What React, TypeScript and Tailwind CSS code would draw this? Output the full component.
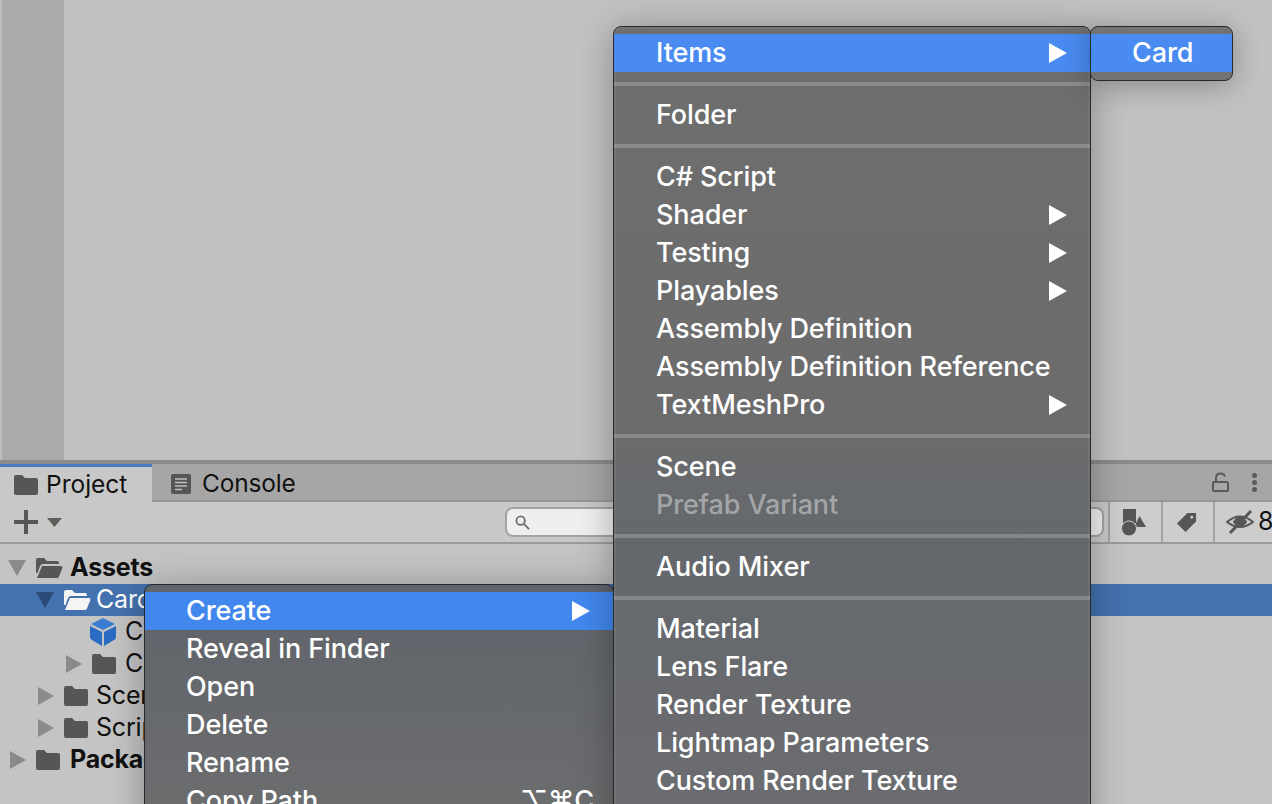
import React from "react";

type Row = { label?: string; arrow?: boolean; active?: boolean; dim?: boolean; shortcut?: string; sep?: boolean };

const MAIN_MENU: Row[] = [
  { label: "Items", arrow: true, active: true },
  { sep: true },
  { label: "Folder" },
  { sep: true },
  { label: "C# Script" },
  { label: "Shader", arrow: true },
  { label: "Testing", arrow: true },
  { label: "Playables", arrow: true },
  { label: "Assembly Definition" },
  { label: "Assembly Definition Reference" },
  { label: "TextMeshPro", arrow: true },
  { sep: true },
  { label: "Scene" },
  { label: "Prefab Variant", dim: true },
  { sep: true },
  { label: "Audio Mixer" },
  { sep: true },
  { label: "Material" },
  { label: "Lens Flare" },
  { label: "Render Texture" },
  { label: "Lightmap Parameters" },
  { label: "Custom Render Texture" },
];

const CONTEXT_MENU: Row[] = [
  { label: "Create", arrow: true, active: true },
  { label: "Reveal in Finder" },
  { label: "Open" },
  { label: "Delete" },
  { label: "Rename" },
  { label: "Copy Path", shortcut: "⌥⌘C" },
];

function Triangle({ dir, color, className }: { dir: "right" | "down"; color: string; className: string }) {
  return (
    <svg viewBox="0 0 18 18" preserveAspectRatio="none" className={className} fill={color}>
      {dir === "right" ? <path d="M0 0 L18 9 L0 18 Z" /> : <path d="M0 0 L18 0 L9 18 Z" />}
    </svg>
  );
}

function Folder({ className, color = "#565656" }: { className: string; color?: string }) {
  return (
    <svg viewBox="0 0 24 20" className={className} fill={color}>
      <path d="M0 2 Q0 0 2 0 H8 L11 3 H22 Q24 3 24 5 V18 Q24 20 22 20 H2 Q0 20 0 18 Z" />
    </svg>
  );
}

function OpenFolder({ className, color = "#565656" }: { className: string; color?: string }) {
  return (
    <svg viewBox="0 0 27 20" className={className} fill={color}>
      <path d="M0 2 Q0 0 2 0 H8 L11 3 H21 Q23 3 23 5 V6 H7 Q5 6 4 8 L1.5 15 H0 Z" />
      <path d="M6 8 H25 Q27 8 26.4 10 L23 18.5 Q22.4 20 21 20 H1 Z" />
    </svg>
  );
}

function Cube() {
  return (
    <svg viewBox="0 0 26 28" className="w-[26px] h-[28px]">
      <path d="M13 0 L25 6 L13 12 L1 6 Z" fill="#3b7dd0" />
      <path d="M0 8 L12 14 V28 L2 22 Q0 21 0 19 Z" fill="#2a6cc4" />
      <path d="M26 8 L14 14 V28 L24 22 Q26 21 26 19 Z" fill="#2a6cc4" />
    </svg>
  );
}

function MenuRow({
  row,
  left = "pl-[42px]",
  activeBg = "bg-[#4a8bf2]",
}: {
  row: Row;
  left?: string;
  activeBg?: string;
}) {
  if (row.sep) {
    return (
      <div className="py-[10px]">
        <div className="h-1 bg-white/20" />
      </div>
    );
  }
  return (
    <div
      className={`h-[38px] flex items-center justify-between ${left} pr-[23px] text-[27px] font-medium tracking-[-0.1px] leading-none ${
        row.active ? activeBg : ""
      } ${row.dim ? "text-[#a3a5a8]" : "text-white"}`}
    >
      <span className="whitespace-nowrap -mt-[2px]">{row.label}</span>
      {row.arrow && <Triangle dir="right" color="#ffffff" className="w-[18px] h-5" />}
      {row.shortcut && <span className="-mr-1 whitespace-nowrap -mt-[2px]">{row.shortcut}</span>}
    </div>
  );
}

function TreeRow({
  pad,
  selected,
  bold,
  children,
  label,
}: {
  pad: number;
  selected?: boolean;
  bold?: boolean;
  children: React.ReactNode;
  label: string;
}) {
  return (
    <div
      className={`h-8 flex items-center text-[25px] tracking-[-0.2px] ${selected ? "bg-[#4472ae] text-white" : "text-[#111]"} ${
        bold ? "font-bold" : ""
      }`}
      style={{ paddingLeft: pad }}
    >
      {children}
      <span className="whitespace-nowrap">{label}</span>
    </div>
  );
}

export default function App() {
  return (
    <div className="relative w-[1272px] h-[804px] overflow-hidden bg-[#c2c2c2] [font-family:Inter,sans-serif]">
      <div className="flex flex-col h-full">
        {/* scene area */}
        <div className="h-[460px] flex shrink-0">
          <div className="w-16 bg-[#aaaaaa] border-l-2 border-[#bdbdbd]" />
        </div>
        <div className="h-1 bg-[#8b8b8b] shrink-0" />

        {/* tabs */}
        <div className="h-[38px] shrink-0 flex items-stretch bg-[#a6a6a6] border-b-2 border-[#979797]">
          <div className="w-[152px] -mb-[2px] bg-[#c8c8c8] border-t-[3px] border-[#4d7bc0] flex items-center pl-[14px] text-[24.5px] text-[#111]">
            <Folder className="w-6 h-5 mr-2" />
            Project
          </div>
          <div className="flex items-center pl-[19px] pt-[3px] text-[24.5px] tracking-[-0.2px] text-[#111]">
            <svg viewBox="0 0 20 20" className="w-5 h-5 mr-[11px]">
              <rect width="20" height="20" rx="2" fill="#565656" />
              <path d="M4 5 H16 M4 8.5 H16 M4 12 H16 M4 15.5 H11" stroke="#c0c0c0" strokeWidth="1.4" />
            </svg>
            Console
          </div>
          <div className="ml-auto flex items-center gap-[22px] pr-[15px]">
            <svg viewBox="0 0 18 20" className="w-[18px] h-5" fill="none" stroke="#5a5a5a" strokeWidth="2">
              <rect x="1" y="10" width="15" height="9" rx="1" />
              <path d="M4 10 V6 Q4 1.5 8.5 1.5 Q12 1.5 13 4.5" />
            </svg>
            <div className="flex flex-col gap-[2px]">
              <div className="w-[5px] h-[5px] rounded-full bg-[#5a5a5a]" />
              <div className="w-[5px] h-[5px] rounded-full bg-[#5a5a5a]" />
              <div className="w-[5px] h-[5px] rounded-full bg-[#5a5a5a]" />
            </div>
          </div>
        </div>

        {/* toolbar */}
        <div className="h-[42px] shrink-0 flex items-center bg-[#c8c8c8] border-b-2 border-[#9b9b9b]">
          <svg viewBox="0 0 24 24" className="w-6 h-6 ml-[14px]" fill="#565656">
            <path d="M10 0 H14 V10 H24 V14 H14 V24 H10 V14 H0 V10 H10 Z" />
          </svg>
          <Triangle dir="down" color="#5f5f5a" className="w-[15px] h-[9px] ml-[9px]" />
          <div className="ml-[443px] w-[599px] h-[30px] rounded-lg bg-[#efefef] border-2 border-[#a3a3a3] flex items-center pl-2">
            <svg viewBox="0 0 16 16" className="w-[15px] h-[15px]" fill="none" stroke="#6e6e6e" strokeWidth="2">
              <circle cx="6" cy="6" r="4.5" />
              <path d="M9.5 9.5 L15 15" />
            </svg>
          </div>
          <div className="ml-[4px] h-full w-[53px] border-l-2 border-[#a3a3a3] bg-[#cdcdcd] flex items-center justify-center">
            <svg viewBox="0 0 25 27" className="w-[25px] h-[27px] -ml-1" fill="#565656">
              <rect x="2" y="0" width="13" height="14" />
              <path d="M18.5 7 L25 18 H13 Z" />
              <circle cx="8" cy="19.5" r="7.5" stroke="#cdcdcd" strokeWidth="1" />
            </svg>
          </div>
          <div className="h-full w-[52px] border-l-2 border-[#a3a3a3] bg-[#cdcdcd] flex items-center justify-center">
            <svg viewBox="0 0 22 22" className="w-[21px] h-[21px] -ml-1" fill="#565656">
              <path d="M12 1 H21 V10 L10 21 L1 12 Z M16.5 4 A1.5 1.5 0 1 0 16.5 7 A1.5 1.5 0 1 0 16.5 4 Z" fillRule="evenodd" />
            </svg>
          </div>
          <div className="h-full flex-1 border-l-2 border-[#a3a3a3] bg-[#cdcdcd] flex items-center pl-[11px] gap-[4px] overflow-hidden text-[25px] text-[#111]">
            <svg viewBox="0 0 28 24" className="w-[28px] h-6 shrink-0" fill="none" stroke="#565656" strokeWidth="2">
              <path d="M1 12 Q14 1 27 12 Q14 22 1 12 Z" />
              <path d="M8 12 Q14 3 20 12 Q14 20 8 12 Z" fill="#565656" />
              <path d="M25 1 L4 23" strokeWidth="3" />
            </svg>
            8
          </div>
        </div>

        {/* project tree */}
        <div className="flex-1 pt-2 bg-[#c4c4c4]">
          <TreeRow pad={8} bold label="Assets">
            <Triangle dir="down" color="#8a8a8a" className="w-[18px] h-4 mr-[10px]" />
            <OpenFolder className="w-[27px] h-5 mr-[7px]" />
          </TreeRow>
          <TreeRow pad={36} selected label="Card">
            <Triangle dir="down" color="#2c4a78" className="w-[18px] h-4 mr-[10px]" />
            <OpenFolder className="w-[27px] h-5 mr-[5px]" color="#f4f4f4" />
          </TreeRow>
          <TreeRow pad={90} label="Card">
            <span className="mr-[9px] flex">
              <Cube />
            </span>
          </TreeRow>
          <TreeRow pad={66} label="Cards">
            <Triangle dir="right" color="#8a8a8a" className="w-4 h-[18px] mr-[10px]" />
            <Folder className="w-6 h-5 mr-[9px]" />
          </TreeRow>
          <TreeRow pad={38} label="Scenes">
            <Triangle dir="right" color="#8a8a8a" className="w-4 h-[18px] mr-[10px]" />
            <Folder className="w-6 h-5 mr-2" />
          </TreeRow>
          <TreeRow pad={38} label="Scripts">
            <Triangle dir="right" color="#8a8a8a" className="w-4 h-[18px] mr-[10px]" />
            <Folder className="w-6 h-5 mr-2" />
          </TreeRow>
          <TreeRow pad={10} bold label="Packages">
            <Triangle dir="right" color="#8a8a8a" className="w-4 h-[18px] mr-[10px]" />
            <Folder className="w-6 h-5 mr-[10px]" />
          </TreeRow>
        </div>
      </div>

      {/* context menu */}
      <div className="absolute left-[144px] top-[584px] w-[470px] h-[300px] pt-[7px] rounded-lg border border-[#26282c] bg-[linear-gradient(180deg,#60656c_0%,#64676c_30%,#6b6c6e_70%,#6c6d6e_100%)] shadow-[0_4px_36px_rgba(0,0,0,0.3)] overflow-hidden">
        {CONTEXT_MENU.map((row) => (
          <MenuRow key={row.label} row={row} left="pl-[41px]" activeBg="bg-[#4287ee]" />
        ))}
      </div>

      {/* create submenu */}
      <div className="absolute left-[613px] top-[26px] w-[478px] h-[840px] pt-[7px] rounded-lg border border-[#2a2a2a] bg-[linear-gradient(180deg,#6e6e6e_0%,#6c6c6c_45%,#64686d_62%,#686a6e_80%,#6b6d70_100%)] shadow-[0_4px_36px_rgba(0,0,0,0.3),inset_0_0_0_2px_rgba(255,255,255,0.05)] overflow-hidden">
        {MAIN_MENU.map((row, i) => (
          <MenuRow key={i} row={row} />
        ))}
      </div>

      {/* items submenu */}
      <div className="absolute left-[1090px] top-[26px] w-[143px] h-[55px] pt-[7px] rounded-lg border border-[#2a2a2a] bg-[#737373] shadow-[0_4px_30px_rgba(0,0,0,0.3)] overflow-hidden">
        <MenuRow row={{ label: "Card", active: true }} left="pl-[41px]" />
      </div>
    </div>
  );
}
